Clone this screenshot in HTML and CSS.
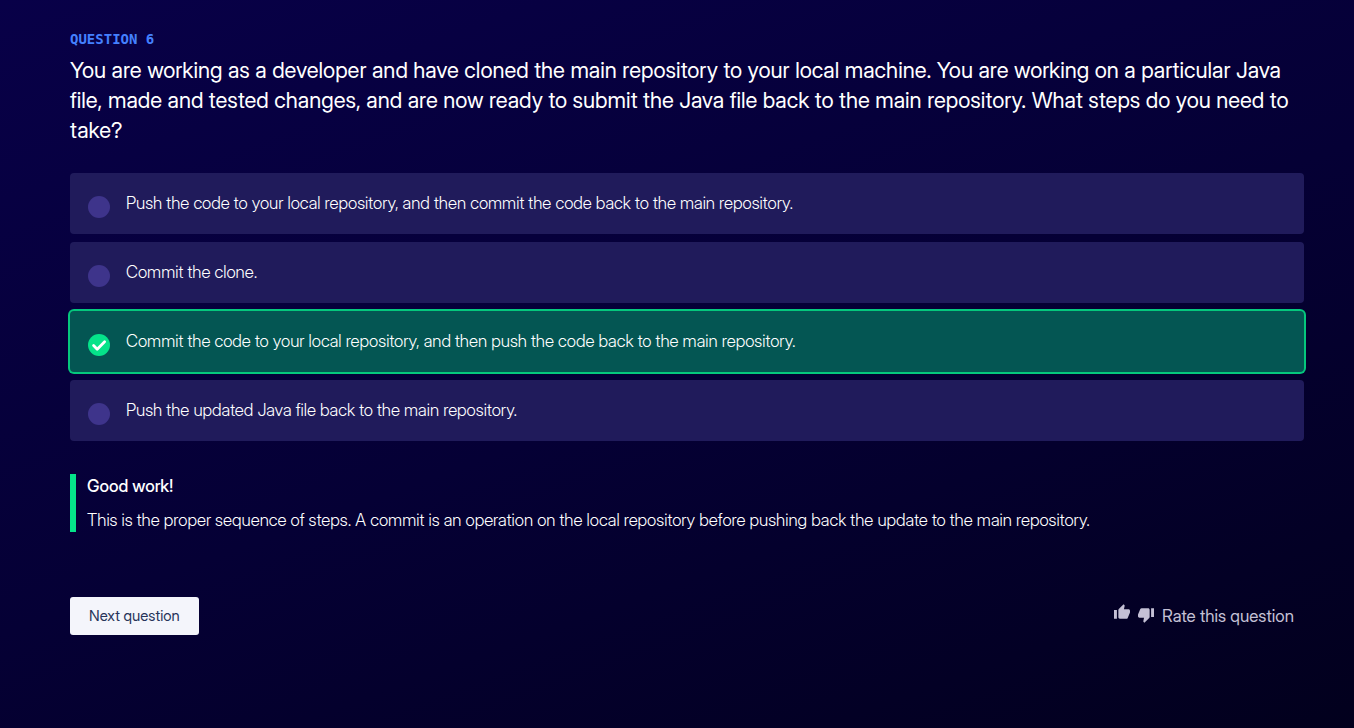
FILE: index.html
```html
<!DOCTYPE html>
<html lang="en">
<head>
<meta charset="utf-8">
<meta name="viewport" content="width=device-width, initial-scale=1">
<title>Question 6</title>
<link rel="stylesheet" href="styles.css">
</head>
<body>
<main class="quiz">
  <p class="eyebrow">QUESTION 6</p>
  <h1 class="question" id="question">You are working as a developer and have cloned the main repository to your local machine. You are working on a particular Java file, made and tested changes, and are now ready to submit the Java file back to the main repository. What steps do you need to take?</h1>

  <div class="options" role="radiogroup" aria-labelledby="question">
    <label class="option" for="a1">
      <span class="marker"><input class="radio" type="radio" name="answer" id="a1"></span>
      <span class="answer">Push the code to your local repository, and then commit the code back to the main repository.</span>
    </label>
    <label class="option" for="a2">
      <span class="marker"><input class="radio" type="radio" name="answer" id="a2"></span>
      <span class="answer">Commit the clone.</span>
    </label>
    <label class="option option-correct" for="a3">
      <span class="marker"><input class="radio" type="radio" name="answer" id="a3" checked>
        <svg class="check" viewBox="0 0 22 22" aria-hidden="true"><path d="M5.6 11.6l3.6 3.6 7.4-7.4" fill="none" stroke="#fff" stroke-width="2.8" stroke-linecap="round" stroke-linejoin="round"/></svg>
      </span>
      <span class="answer">Commit the code to your local repository, and then push the code back to the main repository.</span>
    </label>
    <label class="option" for="a4">
      <span class="marker"><input class="radio" type="radio" name="answer" id="a4"></span>
      <span class="answer">Push the updated Java file back to the main repository.</span>
    </label>
  </div>

  <section class="feedback">
    <h2 class="feedback-title">Good work!</h2>
    <p class="feedback-text">This is the proper sequence of steps. A commit is an operation on the local repository before pushing back the update to the main repository.</p>
  </section>

  <footer class="actions">
    <button class="next" type="button">Next question</button>
    <div class="rate">
      <button class="thumb thumb-up" type="button" aria-label="Thumbs up">
        <svg viewBox="1 1 22 20" width="16" height="15" aria-hidden="true"><path fill="currentColor" d="M1 21h4V9H1v12zm22-11c0-1.1-.9-2-2-2h-6.31l.95-4.57.03-.32c0-.41-.17-.79-.44-1.06L14.17 1 7.59 7.59C7.22 7.95 7 8.45 7 9v10c0 1.1.9 2 2 2h9c.83 0 1.54-.5 1.84-1.22l3.02-7.05c.09-.23.14-.47.14-.73v-2z"/></svg>
      </button>
      <button class="thumb thumb-down" type="button" aria-label="Thumbs down">
        <svg viewBox="1 3 22 20" width="16" height="15" aria-hidden="true"><path fill="currentColor" d="M15 3H6c-.83 0-1.54.5-1.84 1.22l-3.02 7.05c-.09.23-.14.47-.14.73v2c0 1.1.9 2 2 2h6.31l-.95 4.57-.03.32c0 .41.17.79.44 1.06L9.83 23l6.59-6.59c.36-.36.58-.86.58-1.41V5c0-1.1-.9-2-2-2zm4 0v12h4V3h-4z"/></svg>
      </button>
      <span class="rate-label">Rate this question</span>
    </div>
  </footer>
</main>
</body>
</html>
```

FILE: styles.css
```css
* { box-sizing: border-box; }

body {
  margin: 0;
  min-height: 100vh;
  background: linear-gradient(160deg, #080048 0%, #050035 52%, #02001d 100%);
  color: #fff;
  font-family: "Inter Display", Inter, "Liberation Sans", sans-serif;
  font-size: 17px;
}

.quiz { padding: 30px 50px 48px 70px; }

.eyebrow {
  margin: 0;
  color: #4480ff;
  font: bold 14px/18px "DejaVu Sans Mono", monospace;
}

.question {
  margin: 7px 0 28px;
  font-size: 22px;
  font-weight: 400;
  line-height: 30px;
}

.options {
  display: flex;
  flex-direction: column;
  gap: 8px;
}

.option {
  display: flex;
  gap: 16px;
  padding: 18px 18px 16px;
  border-radius: 4px;
  background: #201b5b;
  cursor: pointer;
}

.option-correct {
  background: #045653;
  box-shadow: 0 0 0 2px #05c77d;
}

.marker {
  display: grid;
  flex: none;
  align-self: flex-start;
  margin-top: 5px;
}

.radio {
  appearance: none;
  grid-area: 1 / 1;
  width: 22px;
  height: 22px;
  margin: 0;
  border-radius: 50%;
  background: #3e348b;
}

.radio:checked { background: #05e38a; }

.check {
  grid-area: 1 / 1;
  width: 22px;
  height: 22px;
}

.answer {
  font-weight: 300;
  line-height: 24px;
}

.feedback {
  margin-top: 33px;
  padding-left: 11px;
  border-left: 6px solid #05e38a;
}

.feedback-title {
  margin: 0 0 10px;
  font-size: 17px;
  font-weight: 500;
  line-height: 24px;
}

.feedback-text {
  margin: 0;
  font-weight: 300;
  line-height: 24px;
}

.actions {
  display: flex;
  align-items: center;
  justify-content: space-between;
  margin-top: 65px;
  padding-right: 10px;
}

.next {
  height: 38px;
  padding: 0 19px;
  border: 0;
  border-radius: 3px;
  background: #f4f5fb;
  color: #27345a;
  font-family: inherit;
  font-size: 15px;
  line-height: 20px;
}

.rate {
  display: flex;
  align-items: center;
  color: #c4c0d5;
}

.thumb {
  display: flex;
  margin: 0 8px 0 0;
  padding: 0;
  border: 0;
  background: none;
  color: inherit;
}

.thumb-up { padding-bottom: 10px; }
.thumb-down { padding-bottom: 2px; }

.rate-label { line-height: 24px; }
```
